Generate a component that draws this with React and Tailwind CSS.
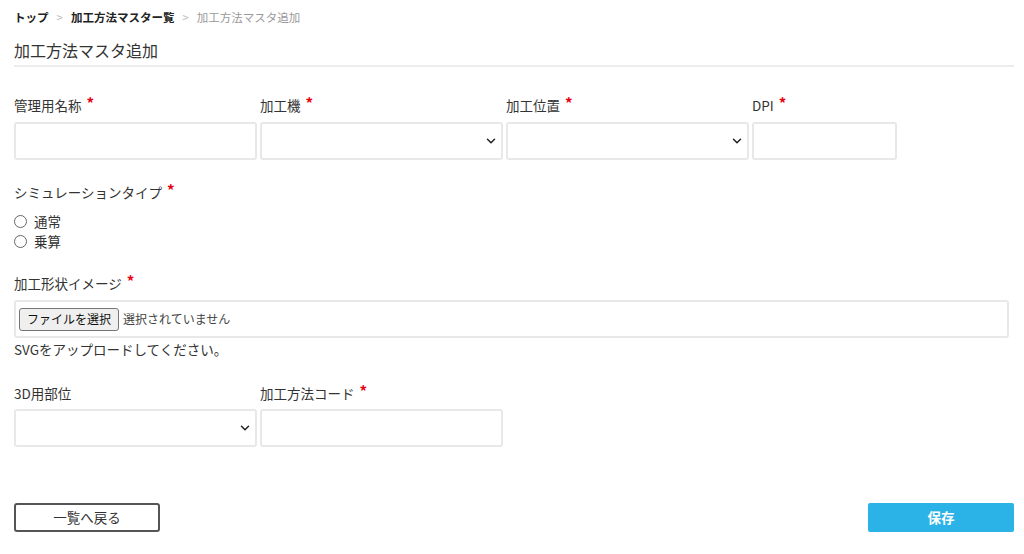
import { useState } from "react";

const FONT = { fontFamily: '"Noto Sans CJK JP", "Noto Sans", sans-serif' };

// Red mark shown after required labels.
function Required() {
  return <span className="ml-[5px] align-top text-[15px] font-bold leading-[16px] text-[#e60012]">*</span>;
}

function FieldLabel({ children, required }) {
  return (
    <div className="h-[20px] text-[13.5px] leading-[20px] text-[#333]">
      {children}
      {required && <Required />}
    </div>
  );
}

function Chevron() {
  return (
    <svg width="10" height="6" viewBox="0 0 10 6" className="absolute right-[5px] top-1/2 -translate-y-1/2">
      <path d="M1.5 1.2l3.5 3.5 3.5-3.5" fill="none" stroke="#222" strokeWidth="1.5" strokeLinecap="round" strokeLinejoin="round" />
    </svg>
  );
}

function TextBox({ width = "w-[243px]", value, onChange }) {
  return (
    <input
      type="text"
      value={value}
      onChange={(e) => onChange(e.target.value)}
      className={`${width} h-[38px] rounded-[3px] border-2 border-[#e8e8e8] bg-white px-2 text-[14px] text-[#333] outline-none`}
    />
  );
}

function SelectBox() {
  return (
    <div className="relative h-[38px] w-[243px] rounded-[3px] border-2 border-[#e8e8e8] bg-white">
      <Chevron />
    </div>
  );
}

function Radio({ label, checked, onClick }) {
  return (
    <button type="button" onClick={onClick} className="flex h-[20px] items-center gap-[7px] text-[13.5px] text-[#333]">
      <span className="flex h-[13px] w-[13px] items-center justify-center rounded-full border border-[#666] bg-white">
        {checked && <span className="h-[7px] w-[7px] rounded-full bg-[#333]" />}
      </span>
      {label}
    </button>
  );
}

export default function App() {
  const [name, setName] = useState("");
  const [dpi, setDpi] = useState("");
  const [code, setCode] = useState("");
  const [simType, setSimType] = useState(null);

  return (
    <div className="min-h-screen bg-white pl-[14px] pr-[10px] text-[#333]" style={FONT}>
      {/* Breadcrumb */}
      <div className="flex h-[36px] items-center text-[11.5px]">
        <span className="font-bold text-[#222]">トップ</span>
        <span className="mx-[8px] text-[#bbb]">&gt;</span>
        <span className="font-bold text-[#222]">加工方法マスター覧</span>
        <span className="mx-[8px] text-[#bbb]">&gt;</span>
        <span className="text-[#999]">加工方法マスタ追加</span>
      </div>

      {/* Title */}
      <div className="h-[31px] border-b-2 border-[#ececec] text-[16px] leading-[28px] text-[#333]">
        加工方法マスタ追加
      </div>

      {/* Row 1 */}
      <div className="mt-[28px] flex gap-[3px]">
        <div>
          <FieldLabel required>管理用名称</FieldLabel>
          <div className="mt-[7px]">
            <TextBox value={name} onChange={setName} />
          </div>
        </div>
        <div>
          <FieldLabel required>加工機</FieldLabel>
          <div className="mt-[7px]">
            <SelectBox />
          </div>
        </div>
        <div>
          <FieldLabel required>加工位置</FieldLabel>
          <div className="mt-[7px]">
            <SelectBox />
          </div>
        </div>
        <div>
          <FieldLabel required>DPI</FieldLabel>
          <div className="mt-[7px]">
            <TextBox width="w-[145px]" value={dpi} onChange={setDpi} />
          </div>
        </div>
      </div>

      {/* Simulation type */}
      <div className="mt-[22px]">
        <FieldLabel required>シミュレーションタイプ</FieldLabel>
        <div className="mt-[9px] flex flex-col">
          <Radio label="通常" checked={simType === "normal"} onClick={() => setSimType("normal")} />
          <Radio label="乗算" checked={simType === "multiply"} onClick={() => setSimType("multiply")} />
        </div>
      </div>

      {/* Shape image */}
      <div className="mt-[22px]">
        <FieldLabel required>加工形状イメージ</FieldLabel>
        <div className="mt-[7px] flex h-[38px] w-[995px] items-center gap-[4px] rounded-[3px] border-2 border-[#e8e8e8] bg-white pl-[3px]">
          <button
            type="button"
            className="h-[23px] rounded-[3px] border border-[#767676] bg-[#efefef] px-[7px] text-[12px] leading-[20px] text-[#111]"
          >
            ファイルを選択
          </button>
          <span className="text-[12px] text-[#444]">選択されていません</span>
        </div>
        <div className="mt-[1px] h-[20px] text-[13.5px] leading-[20px] text-[#333]">SVGをアップロードしてください。</div>
      </div>

      {/* Row 2 */}
      <div className="mt-[24px] flex gap-[3px]">
        <div>
          <FieldLabel>3D用部位</FieldLabel>
          <div className="mt-[6px]">
            <SelectBox />
          </div>
        </div>
        <div>
          <FieldLabel required>加工方法コード</FieldLabel>
          <div className="mt-[6px]">
            <TextBox value={code} onChange={setCode} />
          </div>
        </div>
      </div>

      {/* Actions */}
      <div className="mt-[56px] flex justify-between">
        <button
          type="button"
          className="h-[29px] w-[146px] rounded-[3px] border-2 border-[#555] bg-white text-[13.5px] text-[#333]"
        >
          一覧へ戻る
        </button>
        <button
          type="button"
          className="h-[29px] w-[146px] rounded-[2px] bg-[#2bb2e6] text-[13.5px] font-semibold text-white"
        >
          保存
        </button>
      </div>
    </div>
  );
}
